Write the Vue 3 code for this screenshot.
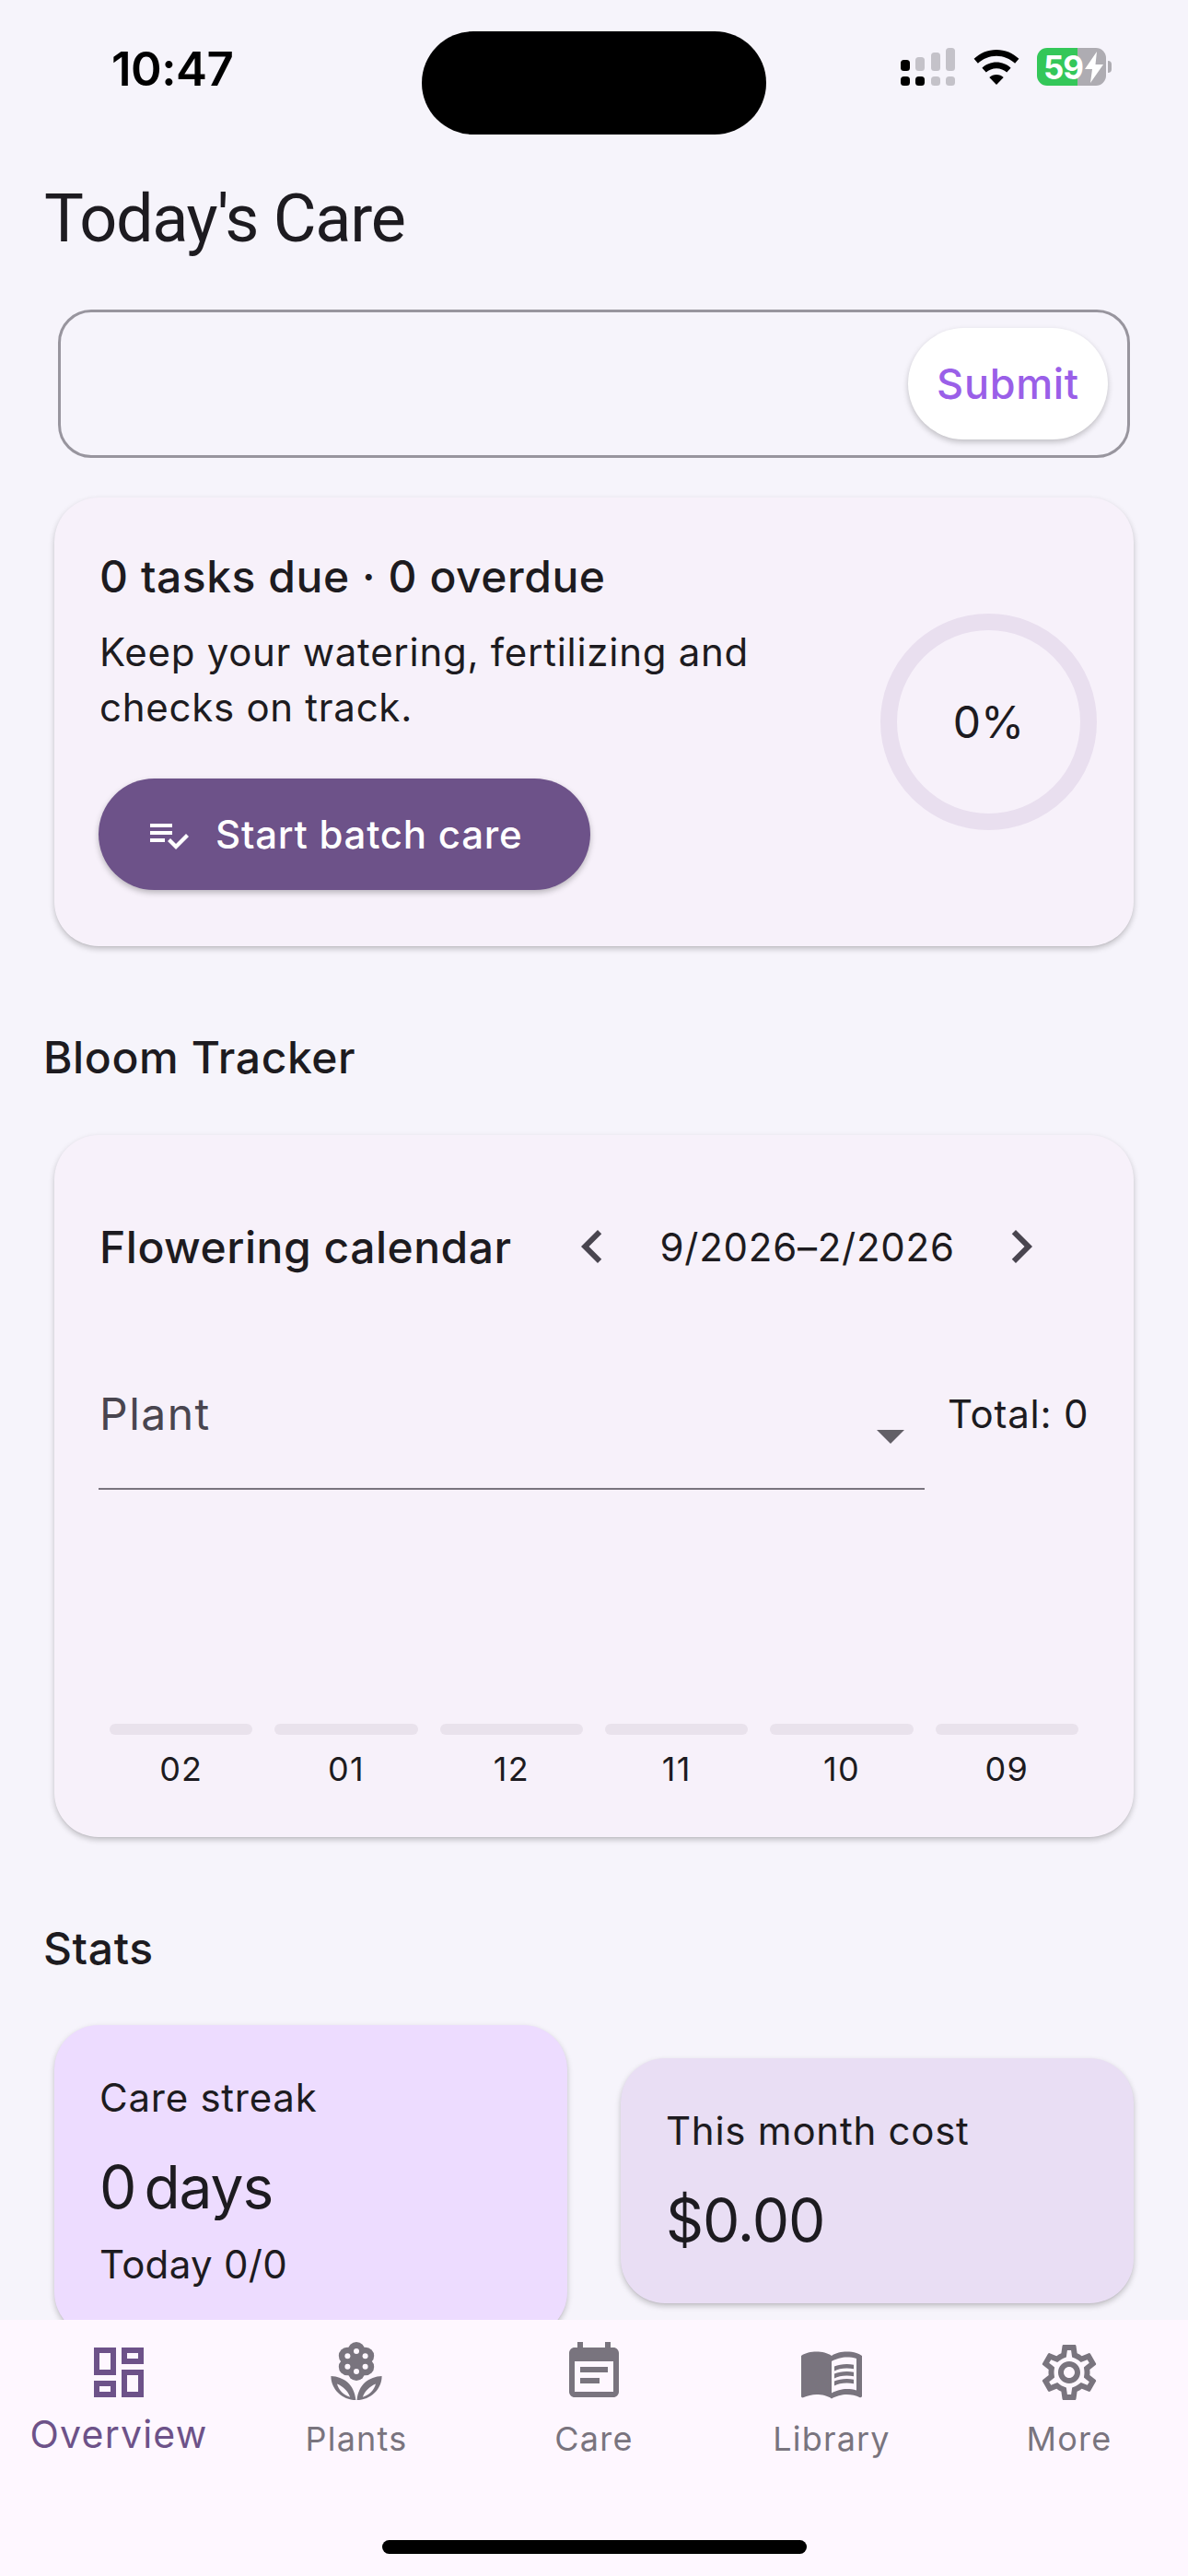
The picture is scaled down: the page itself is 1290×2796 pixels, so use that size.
<template>
  <div class="page">
    <header class="status-bar">
      <div class="time">10:47</div>
      <div class="island"></div>
      <div class="status-icons">
        <svg class="signal" width="59" height="41" viewBox="0 0 59 41">
          <rect x="0" y="13" width="10" height="12" rx="3.5" fill="#000" />
          <rect x="0" y="31" width="10" height="10" rx="3.5" fill="#000" />
          <rect x="16" y="10" width="10" height="15" rx="3.5" fill="#c4c2c9" />
          <rect x="16" y="31" width="10" height="10" rx="3.5" fill="#000" />
          <rect x="33" y="5" width="10" height="20" rx="3.5" fill="#c4c2c9" />
          <rect x="33" y="31" width="10" height="10" rx="3.5" fill="#c4c2c9" />
          <rect x="49" y="0" width="10" height="25" rx="3.5" fill="#c4c2c9" />
          <rect x="49" y="31" width="10" height="10" rx="3.5" fill="#c4c2c9" />
        </svg>
        <svg class="wifi" width="50" height="38" viewBox="0 0 50 38">
          <path d="M25 0C15.500 0 7 3.700.6 9.800l4.300 4.900C10.200 9.700 17.300 6.700 25 6.700s14.800 3 20.100 8l4.300-4.900C43 3.700 34.500 0 25 0z" fill="#000" />
          <path d="M25 13.500c-6 0-11.500 2.300-15.600 6.200l4.400 4.900c2.900-2.700 6.900-4.400 11.200-4.400s8.300 1.700 11.200 4.400l4.400-4.900c-4.100-3.900-9.600-6.200-15.600-6.200z" fill="#000" />
          <path d="M25 27c-3 0-5.700 1.100-7.700 3L25 38l7.700-8c-2-1.900-4.700-3-7.700-3z" fill="#000" />
        </svg>
        <div class="battery">
          <div class="battery-body">
            <span class="battery-num">59</span>
            <svg class="bolt" width="22" height="34" viewBox="0 0 22 34">
              <path d="M14 0 1 19h8L7 34l14-20h-8.500z" fill="#fff" />
            </svg>
          </div>
          <div class="battery-nub"></div>
        </div>
      </div>
    </header>

    <main class="main">
      <h1 class="page-title">Today's Care</h1>

      <div class="note-input">
        <button class="submit-btn">Submit</button>
      </div>

      <section class="card due-card">
        <div class="due-info">
          <div class="due-title">0 tasks due · 0 overdue</div>
          <p class="due-text">Keep your watering, fertilizing and<br />checks on track.</p>
          <button class="batch-btn">
            <svg width="48" height="48" viewBox="0 0 24 24" fill="#fff">
              <path d="M14 10H2v2h12v-2zm0-4H2v2h12V6zM2 16h8v-2H2v2zm19.500-4.500L23 13l-6.990 7-4.510-4.500L13 14l3.010 3 5.490-5.500z" />
            </svg>
            <span>Start batch care</span>
          </button>
        </div>
        <div class="ring">0%</div>
      </section>

      <h2 class="section-title bloom-title">Bloom Tracker</h2>

      <section class="card bloom-card">
        <div class="bloom-head">
          <div class="bloom-name">Flowering calendar</div>
          <svg class="chev chev-left" width="72" height="72" viewBox="0 0 24 24" fill="#49454f">
            <path d="M15.410 7.410 14 6l-6 6 6 6 1.410-1.410L10.830 12z" />
          </svg>
          <div class="range">9/2026–2/2026</div>
          <svg class="chev chev-right" width="72" height="72" viewBox="0 0 24 24" fill="#49454f">
            <path d="M8.590 16.590 10 18l6-6-6-6-1.410 1.410L13.170 12z" />
          </svg>
        </div>

        <div class="filter-row">
          <div class="plant-select">
            <span class="plant-label">Plant</span>
            <span class="select-arrow"></span>
          </div>
          <div class="total">Total: 0</div>
        </div>

        <div class="chart">
          <div v-for="m in months" :key="m" class="chart-col">
            <div class="chart-bar"></div>
            <div class="chart-label">{{ m }}</div>
          </div>
        </div>
      </section>

      <h2 class="section-title stats-title">Stats</h2>

      <div class="stats">
        <div class="card stat-card streak">
          <div class="stat-label">Care streak</div>
          <div class="stat-value">0 days</div>
          <div class="stat-sub">Today 0/0</div>
        </div>
        <div class="card stat-card cost">
          <div class="stat-label">This month cost</div>
          <div class="stat-value">$0.00</div>
        </div>
      </div>
    </main>

    <nav class="bottom-nav">
      <div class="nav-items">
        <div v-for="item in navItems" :key="item.label" class="nav-item" :class="{ active: item.active }">
          <svg width="72" height="72" viewBox="0 0 24 24" fill="currentColor">
            <template v-if="item.flower">
              <circle v-for="(p, i) in petals" :key="'p' + i" :cx="p[0]" :cy="p[1]" r="3.1" />
              <circle cx="12" cy="8" r="3.4" />
              <circle v-for="(p, i) in holes" :key="'h' + i" :cx="p[0]" :cy="p[1]" r="1" fill="#fef7ff" />
            </template>
            <path v-for="(d, i) in item.paths" :key="i" :d="d" fill-rule="evenodd" />
          </svg>
          <span class="nav-label">{{ item.label }}</span>
        </div>
      </div>
      <div class="home-bar"></div>
    </nav>
  </div>
</template>

<script setup>
const months = ['02', '01', '12', '11', '10', '09']

const petals = [[12, 4.1], [15.3, 6], [15.3, 10], [12, 11.9], [8.7, 10], [8.7, 6]]
const holes = [[12, 4.3], [15.2, 6.1], [15.2, 9.9], [12, 11.7], [8.8, 9.9], [8.8, 6.1]]

const navItems = [
  {
    label: 'Overview',
    active: true,
    paths: ['M19 5v2h-4V5h4M9 5v6H5V5h4m10 8v6h-4v-6h4M9 17v2H5v-2h4M21 3h-8v6h8V3zM11 3H3v10h8V3zm10 8h-8v10h8V11zm-10 4H3v6h8v-6z']
  },
  {
    label: 'Plants',
    flower: true,
    paths: [
      'M2.800 13.300c4.600.2 8.500 3 9 8.700-5-.1-9-3.900-9-8.700zM5 16.200c.5 2.100 2.300 4 4.700 4.700-.8-2.100-2.500-3.800-4.700-4.700z',
      'M21.200 13.300c-4.600.2-8.500 3-9 8.700 5-.1 9-3.900 9-8.700zM19 16.200c-.5 2.100-2.300 4-4.700 4.700.8-2.100 2.500-3.800 4.700-4.700z'
    ]
  },
  {
    label: 'Care',
    paths: ['M17 10H7v2h10v-2zm2-7h-1V1h-2v2H8V1H6v2H5c-1.110 0-1.990.9-1.990 2L3 19c0 1.100.89 2 2 2h14c1.100 0 2-.9 2-2V5c0-1.100-.9-2-2-2zm0 16H5V8h14v11zm-5-5H7v2h7v-2z']
  },
  {
    label: 'Library',
    paths: [
      'M21 5c-1.110-.35-2.330-.5-3.500-.5-1.950 0-4.050.4-5.500 1.500-1.450-1.100-3.550-1.500-5.500-1.500S2.450 4.900 1 6v14.650c0 .25.25.5.5.5.1 0 .15-.05.25-.05C3.100 20.450 5.050 20 6.500 20c1.950 0 4.050.4 5.500 1.500 1.350-.85 3.800-1.500 5.500-1.500 1.650 0 3.350.3 4.750 1.050.1.05.15.05.25.05.25 0 .5-.25.5-.5V6c-.6-.45-1.250-.75-2-1zm0 13.500c-1.100-.35-2.300-.5-3.500-.5-1.700 0-4.150.65-5.500 1.500V8c1.350-.85 3.800-1.500 5.500-1.500 1.200 0 2.400.15 3.500.5v11.500z',
      'M17.500 10.500c.88 0 1.730.09 2.500.26V9.240c-.79-.15-1.640-.24-2.500-.24-1.700 0-3.240.29-4.500.83v1.660c1.130-.64 2.700-.99 4.500-.99zM13 12.490v1.660c1.130-.64 2.700-.99 4.500-.99.88 0 1.730.09 2.500.26V11.900c-.79-.15-1.640-.24-2.500-.24-1.700 0-3.240.3-4.500.83zM17.500 14.330c-1.700 0-3.240.29-4.500.83v1.660c1.130-.64 2.700-.99 4.500-.99.88 0 1.730.09 2.500.26v-1.520c-.79-.16-1.640-.24-2.500-.24z'
    ]
  },
  {
    label: 'More',
    paths: ['M19.430 12.980c.04-.32.07-.64.07-.98 0-.34-.03-.66-.07-.98l2.110-1.650c.19-.15.24-.42.12-.64l-2-3.460c-.09-.16-.26-.25-.44-.25-.06 0-.12.01-.17.03l-2.490 1c-.52-.4-1.080-.73-1.690-.98l-.38-2.650C14.460 2.180 14.250 2 14 2h-4c-.25 0-.46.18-.49.42l-.38 2.650c-.61.25-1.170.59-1.690.98l-2.490-1c-.06-.02-.12-.03-.18-.03-.17 0-.34.09-.43.25l-2 3.460c-.13.22-.07.49.12.64l2.110 1.650c-.04.32-.07.65-.07.98 0 .33.03.66.07.98l-2.110 1.650c-.19.15-.24.42-.12.64l2 3.460c.09.16.26.25.44.25.06 0 .12-.01.17-.03l2.490-1c.52.4 1.080.73 1.690.98l.38 2.650c.03.24.24.42.49.42h4c.25 0 .46-.18.49-.42l.38-2.650c.61-.25 1.170-.59 1.690-.98l2.490 1c.06.02.12.03.18.03.17 0 .34-.09.43-.25l2-3.460c.12-.22.07-.49-.12-.64l-2.110-1.650zm-1.980-1.710c.04.31.05.52.05.73 0 .21-.02.43-.05.73l-.14 1.130.89.7 1.080.84-.7 1.210-1.270-.51-1.040-.42-.9.68c-.43.32-.84.56-1.250.73l-1.060.43-.16 1.130-.2 1.350h-1.400l-.19-1.350-.16-1.130-1.060-.43c-.43-.18-.83-.41-1.230-.71l-.91-.7-1.060.43-1.270.51-.7-1.210 1.080-.84.89-.7-.14-1.130c-.03-.31-.05-.54-.05-.74s.02-.43.05-.73l.14-1.130-.89-.7-1.080-.84.7-1.210 1.270.51 1.040.42.9-.68c.43-.32.84-.56 1.250-.73l1.060-.43.16-1.130.2-1.350h1.390l.19 1.350.16 1.130 1.060.43c.43.18.83.41 1.230.71l.91.7 1.060-.43 1.270-.51.7 1.210-1.070.85-.89.7.14 1.130zM12 8c-2.210 0-4 1.790-4 4s1.790 4 4 4 4-1.790 4-4-1.790-4-4-4zm0 6c-1.100 0-2-.9-2-2s.9-2 2-2 2 .9 2 2-.9 2-2 2z']
  }
]
</script>

<style>
html,
body {
  margin: 0;
  background: #f6f4fb;
}
</style>

<style scoped>
.page {
  width: 1290px;
  height: 2796px;
  display: flex;
  flex-direction: column;
  overflow: hidden;
  background: #f6f4fb;
  color: #1d1b20;
  font-family: Inter, 'Liberation Sans', sans-serif;
}

.status-bar {
  flex: none;
  height: 146px;
  padding-top: 34px;
  box-sizing: border-box;
  display: grid;
  grid-template-columns: 458px 374px 1fr;
}

.time {
  padding: 2px 0 0 121px;
  font-size: 51px;
  font-weight: 600;
  line-height: 78px;
  letter-spacing: -0.5px;
  color: #000;
}

.island {
  height: 112px;
  border-radius: 56px;
  background: #000;
}

.status-icons {
  display: flex;
  align-items: flex-start;
  padding: 18px 0 0 146px;
}

.wifi {
  margin: 2px 0 0 20px;
}

.battery {
  display: flex;
  align-items: center;
  margin-left: 19px;
}

.battery-body {
  width: 75px;
  height: 41px;
  border-radius: 11px;
  background: linear-gradient(90deg, #34c759 0, #34c759 44px, #aeacb2 44px);
  display: flex;
  align-items: center;
  padding-left: 7px;
  box-sizing: border-box;
  overflow: hidden;
}

.battery-num {
  font-size: 35px;
  font-weight: 700;
  color: #fff;
  letter-spacing: -1px;
}

.bolt {
  flex: none;
  margin-left: 1px;
}

.battery-nub {
  width: 4px;
  height: 13px;
  margin-left: 2px;
  border-radius: 0 6px 6px 0;
  background: #aeacb2;
}

.main {
  flex: 1;
  min-height: 0;
  overflow: hidden;
  padding: 0 59px;
}

.page-title {
  margin: 45px 0 0 -11px;
  font-family: Roboto, Inter, sans-serif;
  font-size: 72px;
  font-weight: 400;
  line-height: 94px;
  letter-spacing: -1.3px;
}

.note-input {
  margin: 51px 4px 0;
  height: 161px;
  box-sizing: border-box;
  border: 3px solid #98959e;
  border-radius: 36px;
  display: flex;
  justify-content: flex-end;
  padding: 17px 21px 0 0;
}

.submit-btn {
  width: 217px;
  height: 121px;
  border: none;
  border-radius: 61px;
  background: #fff;
  color: #9a5fe8;
  font-family: inherit;
  font-size: 45px;
  font-weight: 500;
  letter-spacing: 0.7px;
  box-shadow: 0 3px 6px rgba(0, 0, 0, 0.22);
}

.card {
  border-radius: 48px;
  box-shadow: 0 1px 1px rgba(0, 0, 0, 0.04), 0 3px 6px rgba(0, 0, 0, 0.22);
}

.due-card {
  margin-top: 43px;
  height: 487px;
  box-sizing: border-box;
  background: #f7f1fa;
  padding: 60px 40px 0 49px;
  display: flex;
  justify-content: space-between;
  align-items: flex-start;
}

.due-title {
  font-size: 48px;
  font-weight: 450;
  line-height: 52px;
  letter-spacing: 0.55px;
}

.due-text {
  margin: 26px 0 0;
  font-size: 42px;
  line-height: 60px;
  letter-spacing: 0.72px;
  color: #1d1b20;
}

.batch-btn {
  margin: 47px 0 0 -1px;
  width: 534px;
  height: 121px;
  border: none;
  border-radius: 61px;
  background: #6d5289;
  color: #fff;
  display: flex;
  align-items: center;
  padding: 0 0 0 52px;
  box-sizing: border-box;
  font-family: inherit;
  font-size: 42px;
  font-weight: 500;
  letter-spacing: 0.75px;
  box-shadow: 0 3px 6px rgba(0, 0, 0, 0.25);
}

.batch-btn span {
  margin-left: 27px;
}

.ring {
  flex: none;
  width: 235px;
  height: 235px;
  margin-top: 66px;
  box-sizing: border-box;
  border: 18px solid #e9dfef;
  border-radius: 50%;
  display: flex;
  align-items: center;
  justify-content: center;
  font-size: 48px;
}

.section-title {
  margin: 0 0 0 -12px;
  font-size: 48px;
  font-weight: 450;
  line-height: 64px;
  letter-spacing: 0.6px;
}

.bloom-title {
  margin-top: 89px;
}

.bloom-card {
  margin-top: 52px;
  height: 762px;
  box-sizing: border-box;
  background: #f7f1fa;
  padding: 85px 48px 0 49px;
}

.bloom-head {
  display: flex;
  align-items: center;
  height: 72px;
}

.bloom-name {
  font-size: 48px;
  font-weight: 450;
  letter-spacing: 0.5px;
}

.chev-left {
  margin-left: 51px;
}

.range {
  margin-left: 38px;
  font-size: 42px;
  letter-spacing: 0.75px;
}

.chev-right {
  margin-left: 36px;
}

.filter-row {
  display: flex;
  align-items: flex-start;
  margin: 111px 0 0 -1px;
}

.plant-select {
  width: 897px;
  height: 117px;
  box-sizing: border-box;
  border-bottom: 2px solid #79747e;
  display: flex;
  justify-content: space-between;
  padding: 0 22px 0 1px;
}

.plant-label {
  font-size: 48px;
  line-height: 70px;
  letter-spacing: 1.5px;
  color: #49454f;
}

.select-arrow {
  width: 0;
  height: 0;
  margin-top: 52px;
  border-left: 15px solid transparent;
  border-right: 15px solid transparent;
  border-top: 15px solid #625f66;
}

.total {
  margin-left: 25px;
  font-size: 42px;
  line-height: 70px;
  letter-spacing: 0.75px;
  white-space: nowrap;
}

.chart {
  display: grid;
  grid-template-columns: repeat(6, 1fr);
  margin: 254px 0 0 -1px;
}

.chart-col {
  display: flex;
  flex-direction: column;
  align-items: center;
  padding: 0 12px;
}

.chart-bar {
  width: 100%;
  height: 12px;
  border-radius: 6px;
  background: #e9e2ec;
}

.chart-label {
  margin-top: 14px;
  font-size: 36px;
  line-height: 46px;
  letter-spacing: 1.2px;
}

.stats-title {
  margin-top: 89px;
}

.stats {
  display: grid;
  grid-template-columns: 557px 557px;
  justify-content: space-between;
  align-items: center;
  margin-top: 51px;
}

.stat-card {
  padding: 49px 48px 46px 49px;
  box-sizing: border-box;
}

.streak {
  background: #eddcff;
  padding-bottom: 48px;
}

.cost {
  background: #e9def4;
}

.stat-label {
  font-size: 42px;
  line-height: 60px;
  letter-spacing: 0.75px;
}

.stat-value {
  margin-top: 23px;
  font-size: 64px;
  line-height: 88px;
  word-spacing: -8px;
  letter-spacing: -1px;
}

.stat-sub {
  margin-top: 10px;
  font-size: 42px;
  line-height: 60px;
  letter-spacing: 0.3px;
}

.bottom-nav {
  flex: none;
  height: 278px;
  box-sizing: border-box;
  background: #fef7ff;
  display: flex;
  flex-direction: column;
  align-items: center;
  padding-top: 21px;
}

.nav-items {
  align-self: stretch;
  display: grid;
  grid-template-columns: repeat(5, 1fr);
}

.nav-item {
  display: flex;
  flex-direction: column;
  align-items: center;
  color: #79747e;
}

.nav-item.active {
  color: #6d5289;
}

.nav-label {
  margin-top: 12px;
  font-size: 36px;
  line-height: 48px;
  letter-spacing: 1.2px;
}

.active .nav-label {
  margin-top: 7px;
  font-size: 41px;
}

.home-bar {
  width: 461px;
  height: 15px;
  margin-top: auto;
  margin-bottom: 24px;
  border-radius: 8px;
  background: #000;
}
</style>
